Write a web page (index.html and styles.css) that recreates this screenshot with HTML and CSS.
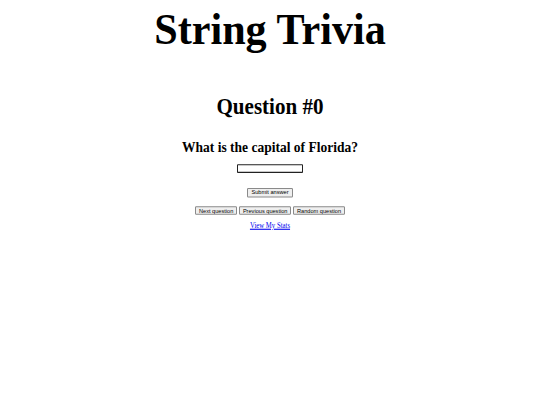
FILE: index.html
```html
<!DOCTYPE html>
<html lang="en">
<head>
<meta charset="utf-8">
<title>String Trivia</title>
<link rel="stylesheet" href="styles.css">
</head>
<body>
<div class="page">
  <h1 class="title">String Trivia</h1>
  <h2 class="qnum">Question #0</h2>
  <h3 class="qtext">What is the capital of Florida?</h3>
  <form class="answer">
    <input class="answer-input" type="text">
    <button class="btn submit" type="button">Submit answer</button>
  </form>
  <div class="nav">
    <button class="btn" type="button">Next question</button>
    <button class="btn" type="button">Previous question</button>
    <button class="btn" type="button">Random question</button>
  </div>
  <a class="stats" href="#">View My Stats</a>
</div>
</body>
</html>
```

FILE: styles.css
```css
html {
  overflow: hidden;
  background: #fff;
}

body {
  margin: 0;
  padding: 0;
  min-height: 405px;
}

.page {
  zoom: 0.421875;
  width: 1280px;
  padding-top: 10px;
  transform: scaleY(1.0738);
  transform-origin: 0 0;
  display: flex;
  flex-direction: column;
  align-items: center;
  font-family: "Liberation Serif", "Times New Roman", serif;
  color: #000;
}

.title {
  font-size: 100px;
  line-height: 110px;
  font-weight: bold;
  margin: 0;
}

.qnum {
  font-size: 50px;
  line-height: 55px;
  font-weight: bold;
  margin: 88px 0 0;
}

.qtext {
  font-size: 32px;
  line-height: 37px;
  font-weight: bold;
  margin: 44px 0 0;
}

.answer {
  display: flex;
  flex-direction: column;
  align-items: center;
  margin: 18px 0 0;
}

.answer-input {
  box-sizing: border-box;
  width: 157px;
  height: 20px;
  border: 2px solid #222;
  border-radius: 2px;
  background: #fff;
  padding: 1px 2px;
  font: 13.33px "Liberation Sans", Arial, sans-serif;
}

.btn {
  box-sizing: border-box;
  height: 21px;
  padding: 1px 7px;
  border: 1px solid #8a8a8a;
  border-radius: 3px;
  background: #efefef;
  color: #000;
  font: 13.33px "Liberation Sans", Arial, sans-serif;
  line-height: 17px;
}

.submit {
  margin-top: 32px;
}

.nav {
  display: flex;
  gap: 4px;
  margin-top: 19px;
}

.stats {
  margin-top: 13px;
  font-size: 16px;
  line-height: 18px;
  color: #0000ee;
  text-decoration: underline;
}
```
